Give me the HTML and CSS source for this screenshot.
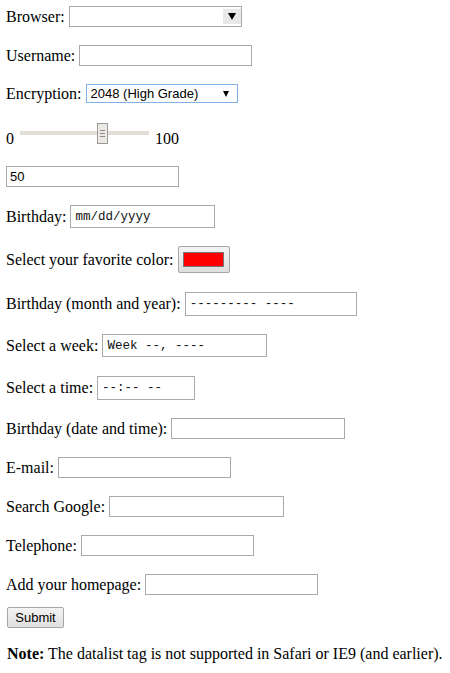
FILE: index.html
```html
<!DOCTYPE html>
<html>
<head>
<meta charset="utf-8">
<link rel="stylesheet" href="styles.css">
</head>
<body>
<form class="form">
  <div class="row"><span>Browser:</span><div class="field combo"><span class="combo-btn"><span class="tri"></span></span></div></div>
  <div class="row"><span>Username:</span><input class="field" type="text"></div>
  <div class="row"><span>Encryption:</span><div class="select"><span class="select-text">2048 (High Grade)</span><span class="tri tri-small"></span></div></div>
  <div class="row row-slider"><span>0</span><div class="range"><div class="track"></div><div class="thumb"><i></i><i></i><i></i></div></div><span>100</span></div>
  <div class="row"><input class="field" type="text" value="50"></div>
  <div class="row"><span>Birthday:</span><div class="field mono date">mm/dd/yyyy</div></div>
  <div class="row"><span>Select your favorite color:</span><div class="color"><div class="swatch"></div></div></div>
  <div class="row row-month"><span>Birthday (month and year):</span><div class="field mono month">--------- ----</div></div>
  <div class="row"><span>Select a week:</span><div class="field mono week">Week --, ----</div></div>
  <div class="row row-time"><span>Select a time:</span><div class="field mono time">--:-- --</div></div>
  <div class="row"><span>Birthday (date and time):</span><input class="field wide" type="text"></div>
  <div class="row"><span>E-mail:</span><input class="field" type="text"></div>
  <div class="row"><span>Search Google:</span><input class="field search" type="text"></div>
  <div class="row"><span>Telephone:</span><input class="field" type="text"></div>
  <div class="row"><span>Add your homepage:</span><input class="field" type="text"></div>
  <div class="row row-submit"><button class="submit" type="button">Submit</button></div>
  <p class="note"><b>Note:</b> The datalist tag is not supported in Safari or IE9 (and earlier).</p>
</form>
</body>
</html>
```

FILE: styles.css
```css
html, body {
  margin: 0;
  padding: 0;
  background: #fff;
}

body {
  font-family: "Liberation Serif", "Times New Roman", serif;
  font-size: 16px;
  color: #000;
}

.form {
  display: flex;
  flex-direction: column;
  gap: 18px;
  padding: 6px 0 0 6px;
}

.row {
  display: flex;
  align-items: center;
  gap: 4px;
  white-space: nowrap;
}

.field {
  box-sizing: border-box;
  width: 173px;
  height: 21px;
  margin: 0;
  border: 1px solid #a9a9a9;
  padding: 1px 3px;
  background: #fff;
  font-family: "Liberation Sans", Arial, sans-serif;
  font-size: 13px;
  color: #000;
  outline: none;
}

.combo {
  position: relative;
}

.combo-btn {
  position: absolute;
  right: 0;
  top: 2px;
  width: 18px;
  height: 15px;
  background: #e9e9e9;
  display: flex;
  align-items: center;
  justify-content: center;
}

.tri {
  width: 0;
  height: 0;
  border-left: 4px solid transparent;
  border-right: 4px solid transparent;
  border-top: 7px solid #000;
}

.tri-small {
  border-left-width: 3px;
  border-right-width: 3px;
  border-top-width: 6px;
}

.select {
  box-sizing: border-box;
  width: 152px;
  height: 19px;
  border: 1px solid #7fb1e8;
  display: flex;
  align-items: center;
  justify-content: space-between;
  padding: 0 8px 0 4px;
  font-family: "Liberation Sans", Arial, sans-serif;
  font-size: 13px;
}

.row-slider {
  align-items: flex-end;
}

.range {
  position: relative;
  width: 129px;
  height: 20px;
  margin: 2px 2px 5px;
  display: flex;
  align-items: center;
}

.track {
  width: 100%;
  height: 4px;
  background: #e3dfd8;
}

.thumb {
  position: absolute;
  left: 77px;
  top: 0;
  box-sizing: border-box;
  width: 11px;
  height: 21px;
  border: 1px solid #9a9a9a;
  background: #ece9e4;
  display: flex;
  flex-direction: column;
  align-items: center;
  justify-content: center;
  gap: 2px;
}

.thumb i {
  display: block;
  width: 5px;
  height: 1px;
  background: #8a8a8a;
}

.mono {
  font-family: "Liberation Mono", "DejaVu Sans Mono", monospace;
  font-size: 12.5px;
  display: flex;
  align-items: center;
  padding: 0 4px;
  color: #111;
}

.date {
  width: 145px;
  height: 23px;
}

.color {
  box-sizing: border-box;
  width: 52px;
  height: 27px;
  border: 1px solid #a6a6a6;
  border-radius: 2px;
  background: linear-gradient(#f4f4f4, #dedede);
  display: flex;
  align-items: center;
  justify-content: center;
}

.swatch {
  box-sizing: border-box;
  width: 41px;
  height: 15px;
  border: 1px solid #777;
  background: #ff0000;
}

.month {
  width: 172px;
  height: 24px;
}

.row-month {
  margin-top: 1px;
}

.week {
  width: 165px;
  height: 23px;
}

.time {
  width: 98px;
  height: 24px;
}

.row-time {
  margin-top: 1px;
}

.wide {
  width: 174px;
}

.search {
  width: 175px;
}

.row-submit {
  margin-top: -6px;
}

.submit {
  box-sizing: border-box;
  width: 57px;
  height: 21px;
  margin-left: 1px;
  border: 1px solid #a6a6a6;
  border-radius: 2px;
  background: linear-gradient(#f3f3f3, #e0e0e0);
  font-family: "Liberation Sans", Arial, sans-serif;
  font-size: 13px;
  color: #000;
  padding: 0;
}

.note {
  margin: -1px 0 0 1px;
}
```
